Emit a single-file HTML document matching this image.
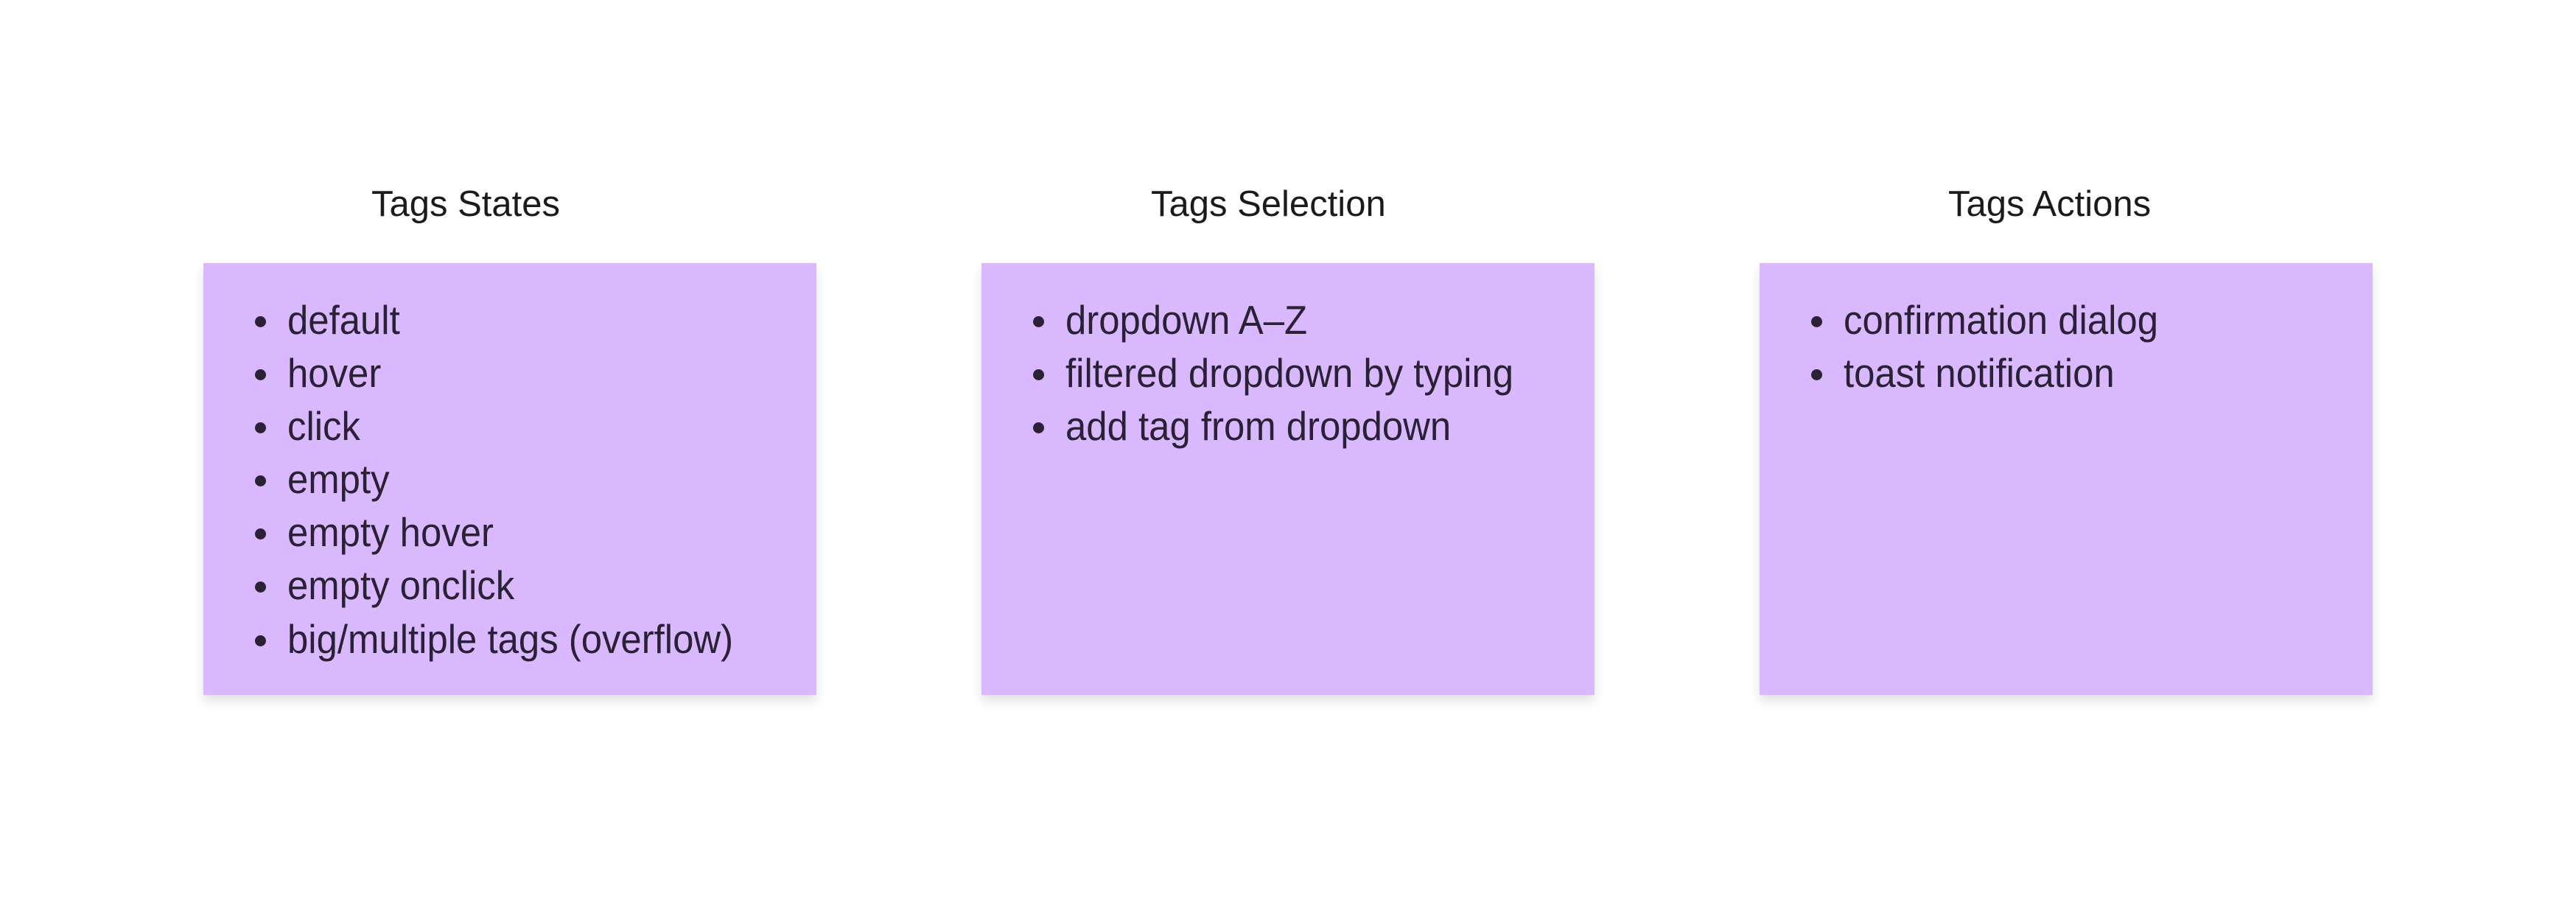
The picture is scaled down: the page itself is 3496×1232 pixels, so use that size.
<!DOCTYPE html>
<html><head><meta charset="utf-8"><style>
html,body{margin:0;padding:0;background:#fff;}
body{width:3496px;height:1232px;position:relative;overflow:hidden;font-family:"Liberation Sans",sans-serif;}
.t{position:absolute;top:247px;font-size:49px;line-height:60px;color:#1b1b1b;white-space:nowrap;}
.box{position:absolute;top:357px;width:832px;height:586px;background:#d9b8fd;box-shadow:0 8px 14px rgba(0,0,0,0.12);}
ul{position:absolute;top:41px;left:0;margin:0;padding:0;list-style:none;}
li{position:relative;height:72.1px;line-height:72.1px;font-size:55px;color:#2a2136;white-space:nowrap;}
li span{position:absolute;left:114px;transform:scaleX(0.925);transform-origin:left center;}
li:before{content:"";position:absolute;left:70px;top:31px;width:15px;height:15px;border-radius:50%;background:#2a2136;}
</style></head><body>
<div class="t" style="left:504px">Tags States</div>
<div class="t" style="left:1562px">Tags Selection</div>
<div class="t" style="left:2644px">Tags Actions</div>
<div class="box" style="left:276px"><ul>
<li><span>default</span></li><li><span>hover</span></li><li><span>click</span></li><li><span>empty</span></li><li><span>empty hover</span></li><li><span>empty onclick</span></li><li><span>big/multiple tags (overflow)</span></li></ul></div>
<div class="box" style="left:1332px"><ul>
<li><span>dropdown A–Z</span></li><li><span>filtered dropdown by typing</span></li><li><span>add tag from dropdown</span></li></ul></div>
<div class="box" style="left:2388px"><ul>
<li><span>confirmation dialog</span></li><li><span>toast notification</span></li></ul></div>
</body></html>
